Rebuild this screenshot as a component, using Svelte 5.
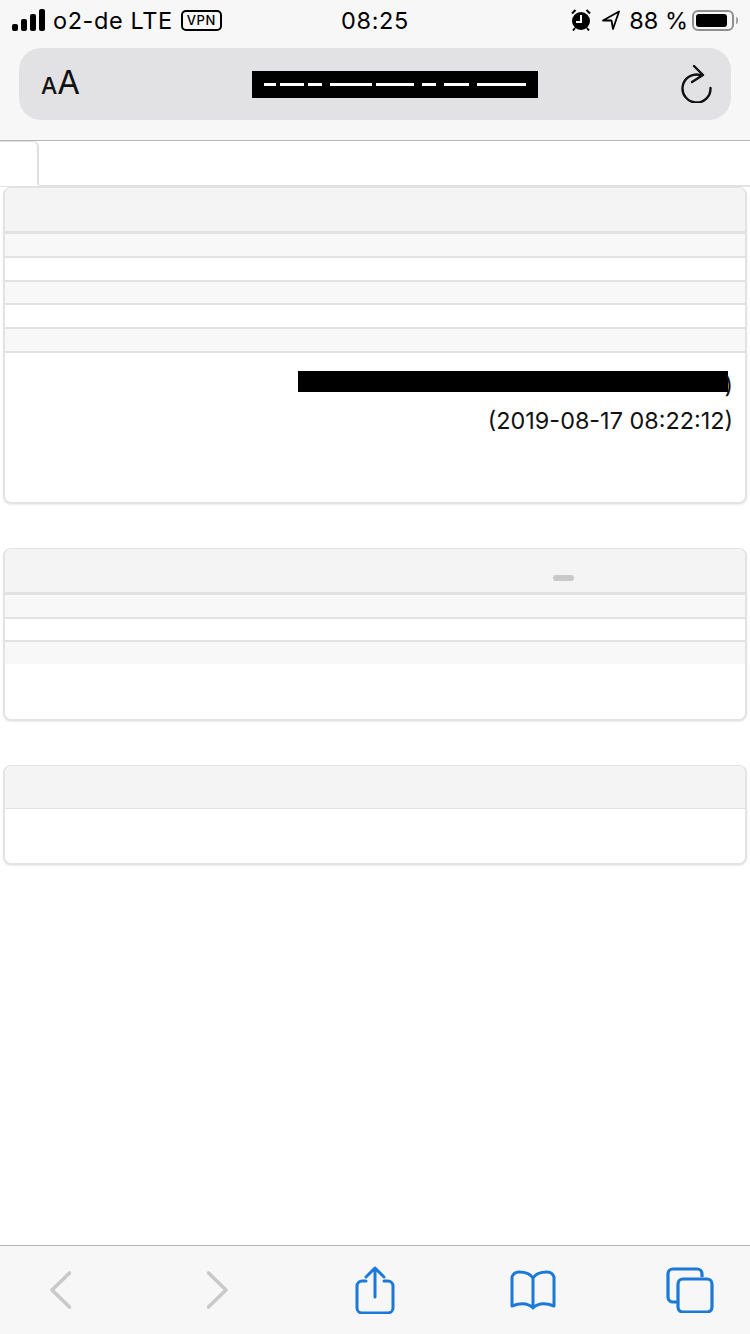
<script>
  const panels = [
    { rows: 5, body: 'big' },
    { rows: 3, body: 'mid' },
    { rows: 0, body: 'small' }
  ];
</script>

<div class="page">
  <header class="chrome">
    <div class="status">
      <div class="side left">
        <svg class="bars" width="33" height="22" viewBox="0 0 33 22"><rect x="0" y="15" width="6" height="7" rx="2"/><rect x="9" y="10" width="6" height="12" rx="2"/><rect x="18" y="5" width="6" height="17" rx="2"/><rect x="27" y="0" width="6" height="22" rx="2"/></svg>
        <span class="carrier">o2-de LTE</span>
        <span class="vpn">VPN</span>
      </div>
      <div class="time">08:25</div>
      <div class="side right">
        <svg width="20" height="22" viewBox="0 0 20 22"><path d="M1 4.5 4.5 1M19 4.5 15.5 1M4 19l-2 2.5M16 19l2 2.5" stroke="#000" stroke-width="2" fill="none"/><circle cx="10" cy="12" r="9"/><path d="M10 6v7H5" stroke="#f7f7f7" stroke-width="2" fill="none"/></svg>
        <svg class="arrow" width="18" height="20" viewBox="0 0 18 20"><path d="M1 10.5 17 1.5 11 19 9.5 10.5Z" fill="none" stroke="#000" stroke-width="1.8" stroke-linejoin="round"/></svg>
        <span class="pct">88 %</span>
        <div class="battery"><div class="level"></div></div>
        <div class="nub"></div>
      </div>
    </div>
    <div class="address">
      <span class="aa"><small>A</small>A</span>
      <div class="mask"><div class="dashes"></div></div>
      <svg width="32" height="38" viewBox="0 0 32 38"><path d="M14 1 23 10 12 17M20 10A14 14 0 1 0 30.5 23" fill="none" stroke="#111" stroke-width="2.4" stroke-linecap="round" stroke-linejoin="round"/></svg>
    </div>
  </header>

  <main>
    <div class="tabs"><div class="tab"></div></div>

    {#each panels as panel}
      <section class="panel">
        <div class="head" class:plain={panel.rows === 0}>
          {#if panel.rows === 3}<span class="chip"></span>{/if}
        </div>
        {#if panel.rows}
          <div class="rows">
            {#each Array(panel.rows) as _, i}
              <div class="row" class:odd={i % 2 === 0}></div>
            {/each}
          </div>
        {/if}
        <div class="body {panel.body}">
          {#if panel.body === 'big'}
            <div class="line first"><span class="redact"></span><span>)</span></div>
            <div class="line">(2019-08-17 08:22:12)</div>
          {/if}
        </div>
      </section>
    {/each}
  </main>

  <footer class="toolbar">
    <svg width="26" height="40" viewBox="0 0 26 40"><path d="M22.5 3 5 20l17.5 17" fill="none" stroke="#c9c9c9" stroke-width="3.6" stroke-linecap="round" stroke-linejoin="round"/></svg>
    <svg width="26" height="40" viewBox="0 0 26 40"><path d="M3.5 3 21 20 3.500 37" fill="none" stroke="#c9c9c9" stroke-width="3.6" stroke-linecap="round" stroke-linejoin="round"/></svg>
    <svg width="40" height="48" viewBox="0 0 40 48"><path d="M11 15H7a5 5 0 0 0-5 5v22a5 5 0 0 0 5 5h26a5 5 0 0 0 5-5V20a5 5 0 0 0-5-5h-4M20 31V3M11 11l9-9 9 9" fill="none" stroke="#1b79d8" stroke-width="3" stroke-linecap="round" stroke-linejoin="round"/></svg>
    <svg width="46" height="40" viewBox="0 0 46 40"><path d="M23 8C20 3 13 2 9 2 6 2 3 4 2 7v29c8-3 16-3 21 2 5-5 13-5 21-2V7c-1-3-4-5-7-5-4 0-11 1-14 6Zm0 0v30" fill="none" stroke="#1b79d8" stroke-width="3" stroke-linecap="round" stroke-linejoin="round"/></svg>
    <svg width="48" height="46" viewBox="0 0 48 46"><path d="M36 10V7a5 5 0 0 0-5-5H7a5 5 0 0 0-5 5v23a5 5 0 0 0 5 5h5" fill="none" stroke="#1b79d8" stroke-width="3.2"/><rect x="12" y="12" width="34" height="33" rx="5" fill="none" stroke="#1b79d8" stroke-width="3.2"/></svg>
  </footer>
</div>

<style>
  :global(body) { margin: 0; background: #fff; }
  .page {
    width: 750px;
    height: 1334px;
    display: flex;
    flex-direction: column;
    font-family: Inter, "Liberation Sans", sans-serif;
    color: #000;
    overflow: hidden;
  }
  .chrome {
    height: 140px;
    background: #f7f7f7;
    border-bottom: 1px solid #b4b4b4;
    flex: none;
  }
  .status {
    height: 48px;
    box-sizing: border-box;
    padding: 0 12px 8px;
    display: grid;
    grid-template-columns: 1fr auto 1fr;
    align-items: center;
    font-size: 23.5px;
    letter-spacing: 0.6px;
  }
  .side { display: flex; align-items: center; }
  .right { justify-content: flex-end; }
  .bars { fill: #000; }
  .carrier { margin-left: 8px; }
  .vpn {
    margin-left: 8px;
    font-size: 13px;
    font-weight: 500;
    letter-spacing: 0.7px;
    line-height: 17px;
    padding: 0 4px;
    border: 2px solid #000;
    border-radius: 5px;
  }
  .arrow { margin-left: 11px; }
  .pct { margin-left: 9px; letter-spacing: 0; }
  .battery {
    margin-left: 4px;
    width: 42px;
    height: 21px;
    box-sizing: border-box;
    border: 2px solid #8f8f8f;
    border-radius: 6px;
    padding: 2px;
  }
  .level { height: 100%; width: 92%; background: #000; border-radius: 3px; }
  .nub { width: 2px; height: 7px; margin-left: 2px; background: #a5a5a5; border-radius: 0 2px 2px 0; }
  .address {
    height: 72px;
    margin: 0 19px;
    padding: 0 19px 0 22px;
    background: #e2e2e4;
    border-radius: 22px;
    display: flex;
    align-items: center;
    justify-content: space-between;
  }
  .aa { width: 38px; font-size: 33px; line-height: 40px; color: #111; }
  .aa small { font-size: 23px; font-weight: 500; }
  .mask {
    width: 286px;
    height: 27px;
    margin-left: 30px;
    background: #000;
    display: flex;
    align-items: center;
    justify-content: center;
  }
  .dashes {
    width: 262px;
    height: 3px;
    background: linear-gradient(90deg,
      #fff 0 12px, #000 12px 16px, #fff 16px 40px, #000 40px 44px, #fff 44px 58px,
      #000 58px 66px, #fff 66px 108px, #000 108px 112px, #fff 112px 150px,
      #000 150px 158px, #fff 158px 172px, #000 172px 180px, #fff 180px 205px,
      #000 205px 213px, #fff 213px 262px);
  }
  main { flex: 1; }
  .tabs {
    height: 44px;
    border-bottom: 2px solid #e2e2e2;
  }
  .tab {
    width: 39px;
    height: 45px;
    box-sizing: border-box;
    background: #fff;
    border-right: 2px solid #dedede;
    border-top: 1px solid #dedede;
    border-bottom: 2px solid #fff;
    border-top-right-radius: 6px;
  }
  .panel {
    margin: 0 3px 44px;
    border: 2px solid #e3e3e3;
    border-top-width: 1px;
    border-radius: 8px;
    overflow: hidden;
    background: #fff;
    box-shadow: 0 1px 2px rgba(0, 0, 0, 0.08);
  }
  .head {
    height: 43px;
    background: #f4f4f4;
    border-bottom: 3px solid #e2e2e2;
    position: relative;
  }
  .head.plain { height: 42px; border-bottom-width: 1px; }
  .chip {
    position: absolute;
    left: 548px;
    top: 26px;
    width: 21px;
    height: 6px;
    border-radius: 3px;
    background: #c9c9c9;
  }
  .row {
    height: 21.75px;
    background: #fff;
    border-bottom: 2px solid #e2e2e2;
  }
  .row.odd { background: #f8f8f8; }
  .rows .row:last-child { border-bottom: 0; }
  .panel:first-of-type .rows .row:last-child { border-bottom: 2px solid #e2e2e2; }
  .body { box-sizing: border-box; text-align: right; padding: 0 12px; font-size: 23.4px; color: #111; }
  .body.big { height: 149px; padding-top: 18px; }
  .body.mid { height: 54.75px; }
  .body.small { height: 54px; }
  .line { height: 36px; line-height: 36px; }
  .line.first { display: flex; justify-content: flex-end; align-items: flex-start; line-height: 28px; height: 32px; }
  .redact { width: 430px; height: 21px; background: #000; margin-right: -4px; }
  .toolbar {
    height: 88px;
    flex: none;
    background: #f7f7f7;
    border-top: 1px solid #b4b4b4;
    display: grid;
    grid-template-columns: 48px 1fr 48px 1fr 48px 1fr 48px 1fr 48px;
    padding: 0 36px;
    align-items: center;
    justify-items: center;
  }
  .toolbar svg:nth-child(1) { grid-column: 1; }
  .toolbar svg:nth-child(2) { grid-column: 3; }
  .toolbar svg:nth-child(3) { grid-column: 5; }
  .toolbar svg:nth-child(4) { grid-column: 7; }
  .toolbar svg:nth-child(5) { grid-column: 9; }
</style>
